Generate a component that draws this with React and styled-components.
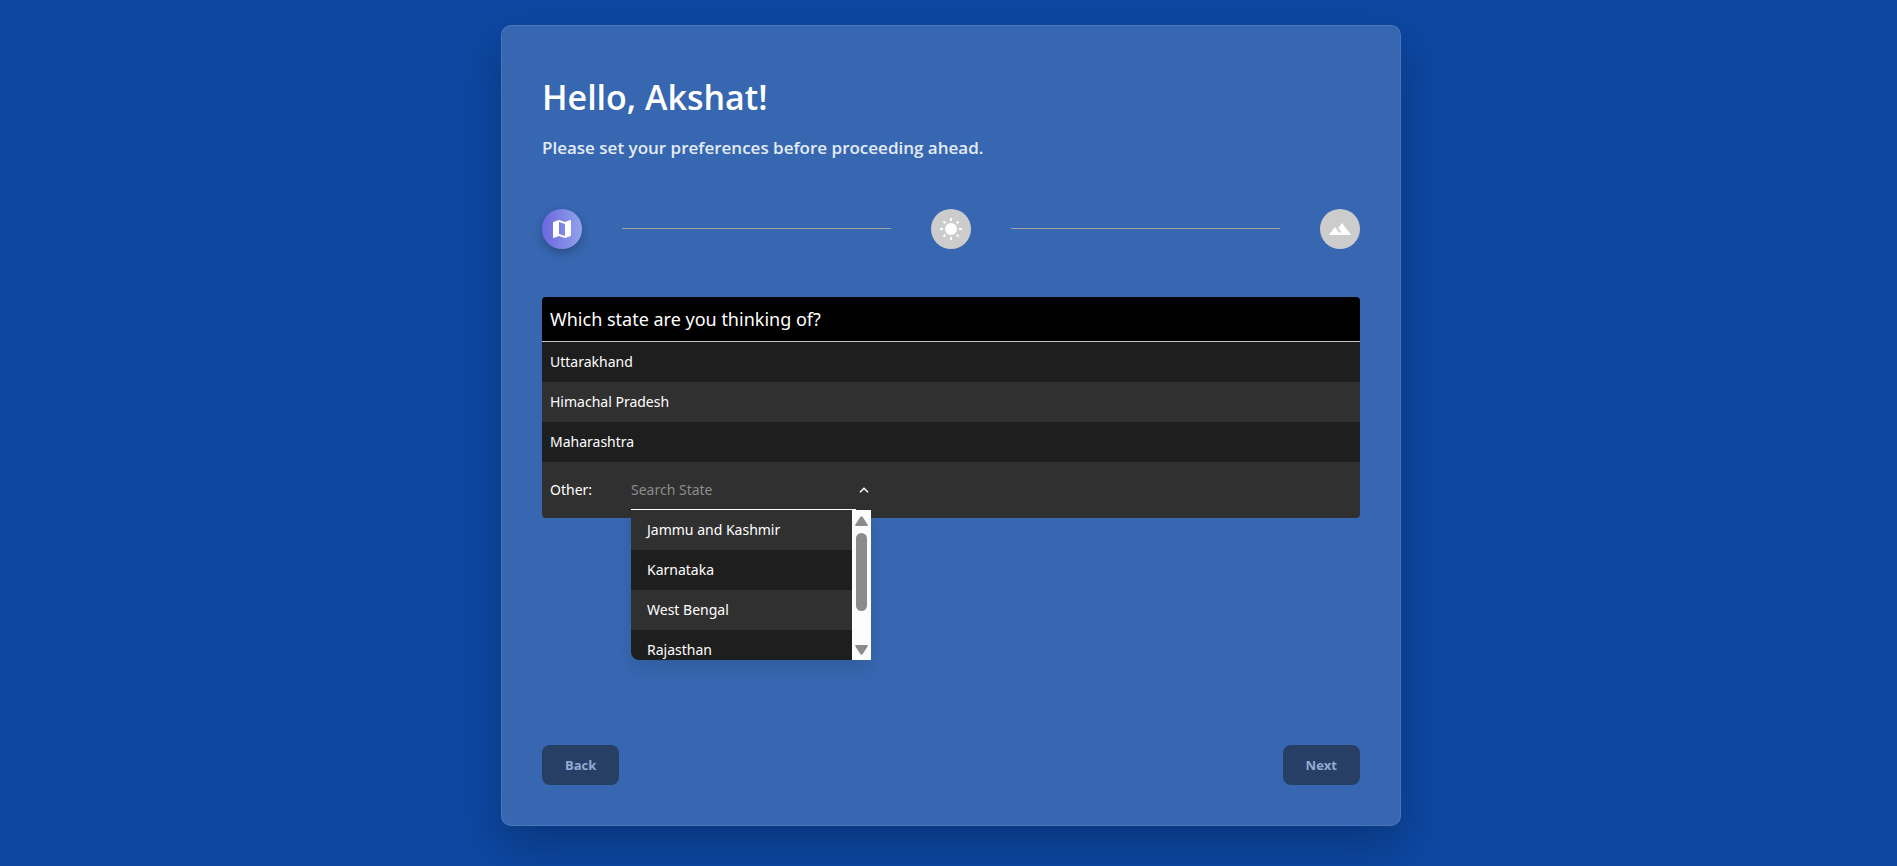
import React from "react";
import styled, { createGlobalStyle } from "styled-components";
import { MdMap, MdLandscape } from "react-icons/md";

const GlobalStyle = createGlobalStyle`
  *, *::before, *::after { box-sizing: border-box; }
  body {
    margin: 0;
    background: #0d47a1;
    color: #fff;
    font-family: "Segoe UI", "Open Sans", sans-serif;
  }
`;

const Page = styled.main`
  display: flex;
  justify-content: center;
  align-items: flex-start;
  min-height: 100vh;
  padding: 25px 0 40px 5px;
`;

const Card = styled.section`
  width: 100%;
  max-width: 900px;
  padding: 40px;
  border: 1px solid rgba(255, 255, 255, 0.1);
  border-radius: 10px;
  background: rgba(255, 255, 255, 0.175);
  box-shadow: 0 20px 45px rgba(0, 0, 0, 0.23);
`;

const Title = styled.h1`
  margin: 0 0 6px;
  font-size: 34px;
  line-height: 62px;
  font-weight: 600;
`;

const Subtitle = styled.p`
  margin: 0;
  color: #e4ebf6;
  font-size: 17px;
  line-height: 27px;
  font-weight: 600;
`;

const Stepper = styled.ol`
  display: flex;
  align-items: center;
  gap: 40px;
  margin: 48px 0;
  padding: 0;
  list-style: none;
`;

const Step = styled.li`
  display: flex;
  align-items: center;
  justify-content: center;
  flex: none;
  width: 40px;
  height: 40px;
  border-radius: 50%;
  background: ${(p) => (p.$active ? "linear-gradient(90deg, #6a67df, #93a2ea)" : "#ccc")};
  box-shadow: ${(p) => (p.$active ? "0 4px 10px rgba(0, 0, 0, 0.25)" : "none")};
`;

const Connector = styled.li`
  flex: 1;
  height: 1px;
  margin-bottom: 1px;
  background: #a0a0a4;
`;

const StepBody = styled.div`
  min-height: 400px;
  font-family: "Noto Sans", sans-serif;
`;

const Question = styled.h2`
  margin: 0;
  padding: 0 8px;
  border-bottom: 1px solid #c4c4c4;
  border-radius: 4px 4px 0 0;
  background: #000;
  font-size: 18px;
  line-height: 44px;
  font-weight: 400;
`;

const OptionList = styled.ul`
  margin: 0;
  padding: 0;
  list-style: none;
`;

const Option = styled.li`
  height: 40px;
  padding: 0 ${(p) => (p.$inset ? 16 : 8)}px;
  background: ${(p) => (p.$light ? "#303030" : "#1e1e1e")};
  font-size: 14px;
  line-height: 40px;
`;

const OtherRow = styled.div`
  display: flex;
  align-items: flex-start;
  height: 56px;
  padding: 0 8px;
  border-radius: 0 0 4px 4px;
  background: #303030;
  font-size: 14px;
`;

const OtherLabel = styled.label`
  width: 81px;
  line-height: 56px;
`;

const Combo = styled.div`
  position: relative;
  display: flex;
  width: 240px;
  height: 48px;
`;

const SearchInput = styled.input`
  flex: 1;
  min-width: 0;
  padding: 8px 0 0;
  border: 0;
  border-bottom: 1px solid #fff;
  outline: 0;
  background: transparent;
  color: #fff;
  font: inherit;
  &::placeholder { color: #8c8c8c; opacity: 1; }
`;

const Toggle = styled.button`
  display: flex;
  align-items: center;
  justify-content: center;
  width: 15px;
  padding: 8px 0 0;
  border: 0;
  background: transparent;
  color: #fff;
`;

const Menu = styled.div`
  position: absolute;
  top: 100%;
  left: 0;
  display: flex;
  width: 100%;
  height: 150px;
  overflow: hidden;
  border-radius: 0 0 0 8px;
  box-shadow: 0 8px 16px rgba(0, 0, 0, 0.1);
`;

const MenuOptions = styled(OptionList)`
  flex: 1;
  overflow: hidden;
`;

const Scrollbar = styled.div`
  display: flex;
  flex-direction: column;
  align-items: center;
  width: 19px;
  padding: 6px 0 5px;
  background: #fcfcfc;
  color: #8b8b8b;
`;

const Thumb = styled.span`
  width: 11px;
  height: 78px;
  margin: 7px 0 auto;
  border-radius: 6px;
  background: currentColor;
`;

const Actions = styled.footer`
  display: flex;
  justify-content: space-between;
  margin-top: 48px;
`;

const ActionButton = styled.button`
  height: 40px;
  padding: 0 23px;
  border: 0;
  border-radius: 8px;
  background: #273f65;
  color: #93aad4;
  font-family: inherit;
  font-size: 13px;
  line-height: 20px;
  font-weight: 700;
`;

const SunIcon = () => (
  <svg width="24" height="24" viewBox="0 0 24 24" aria-hidden="true">
    <circle cx="12" cy="12" r="6" fill="#fff" />
    <path
      d="M12 1V4M12 20V23M1 12H4M20 12H23M4.500 4.500L6.300 6.300M17.700 17.700L19.500 19.500M4.500 19.500L6.300 17.700M17.700 6.300L19.500 4.500"
      stroke="#fff"
      strokeWidth="2"
    />
  </svg>
);

const Arrow = ({ down }) => (
  <svg width="13" height="10" viewBox="0 0 13 10" aria-hidden="true">
    <path
      d={down
        ? "M1 0H12Q13.400 0.300 12.600 1.600L7.500 9.200Q6.500 10.400 5.500 9.200L0.400 1.600Q-.4 .3 1 0Z"
        : "M1 10H12Q13.400 9.700 12.600 8.400L7.500 .8Q6.500 -.4 5.500 .8L.4 8.400Q-.4 9.700 1 10Z"}
      fill="currentColor"
    />
  </svg>
);

const options = ["Uttarakhand", "Himachal Pradesh", "Maharashtra"];
const states = ["Jammu and Kashmir", "Karnataka", "West Bengal", "Rajasthan"];

export default function App() {
  return (
    <>
      <GlobalStyle />
      <Page>
        <Card>
          <header>
            <Title>Hello, Akshat!</Title>
            <Subtitle>Please set your preferences before proceeding ahead.</Subtitle>
          </header>
          <Stepper>
            <Step $active><MdMap size={24} /></Step>
            <Connector aria-hidden="true" />
            <Step><SunIcon /></Step>
            <Connector aria-hidden="true" />
            <Step><MdLandscape size={24} /></Step>
          </Stepper>
          <StepBody>
            <Question>Which state are you thinking of?</Question>
            <OptionList>
              {options.map((name, i) => (
                <Option key={name} $light={i % 2 === 1}>{name}</Option>
              ))}
            </OptionList>
            <OtherRow>
              <OtherLabel htmlFor="other-state">Other:</OtherLabel>
              <Combo>
                <SearchInput id="other-state" type="text" placeholder="Search State" />
                <Toggle type="button" aria-label="Toggle states">
                  <svg width="10" height="6" viewBox="0 0 10 6" aria-hidden="true">
                    <path d="M1 5.200L5 1.200L9 5.200" fill="none" stroke="currentColor" strokeWidth="1.500" />
                  </svg>
                </Toggle>
                <Menu>
                  <MenuOptions>
                    {states.map((name, i) => (
                      <Option key={name} $inset $light={i % 2 === 0}>{name}</Option>
                    ))}
                  </MenuOptions>
                  <Scrollbar aria-hidden="true">
                    <Arrow />
                    <Thumb />
                    <Arrow down />
                  </Scrollbar>
                </Menu>
              </Combo>
            </OtherRow>
          </StepBody>
          <Actions>
            <ActionButton type="button">Back</ActionButton>
            <ActionButton type="button">Next</ActionButton>
          </Actions>
        </Card>
      </Page>
    </>
  );
}
